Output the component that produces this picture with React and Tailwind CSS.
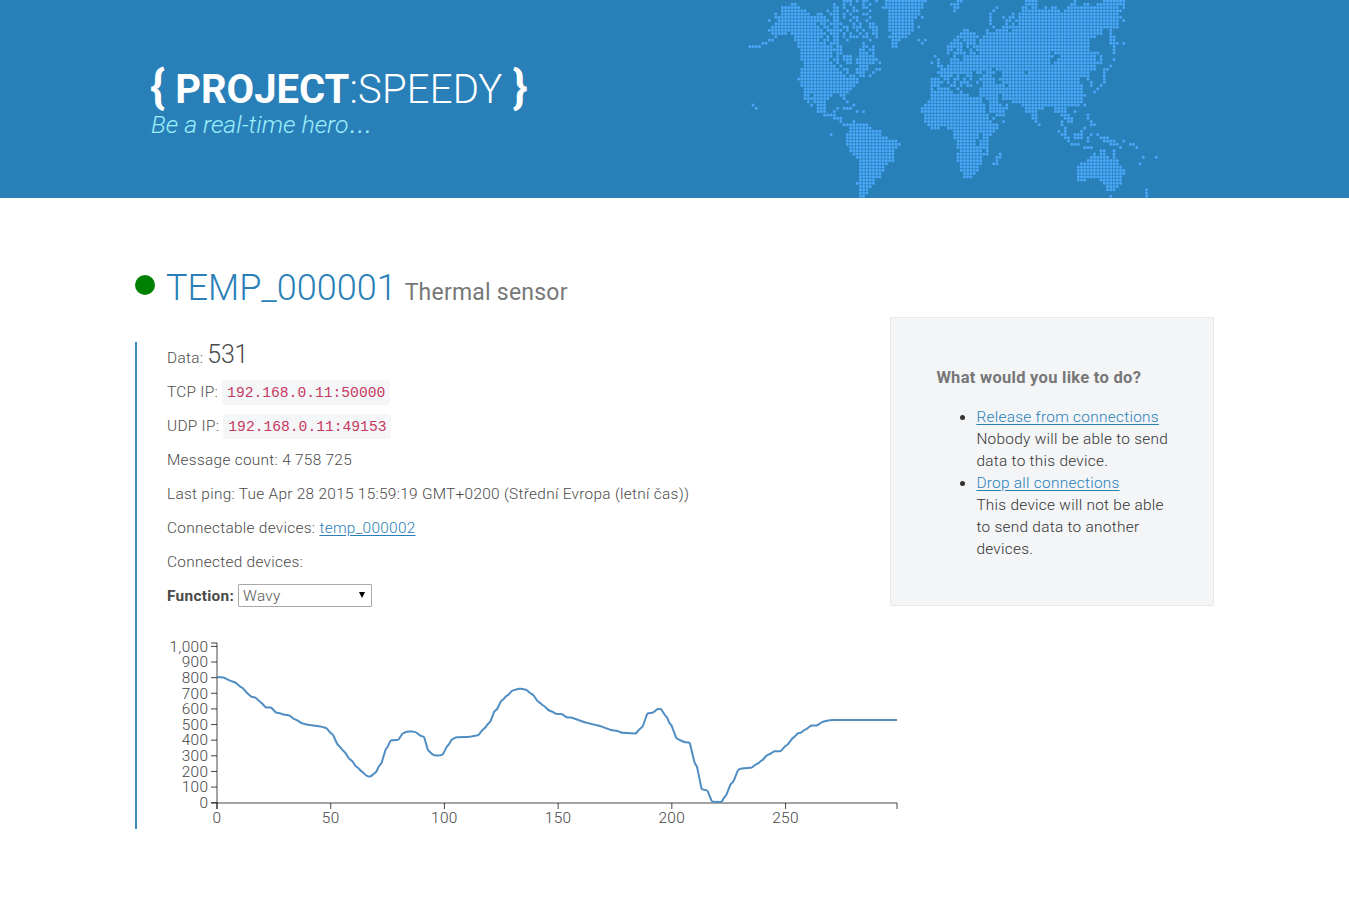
import React from "react";

// World map dots: one string per row, each holding runs of column numbers.
const MAP_ROWS = [
  "29-31 33 35-36 39 42-54 64-65 85-88 100 109-115",
  "13-14 26 29 31 35 37 42-53 62-64 85-88 99-100 103-104 107-115",
  "10-15 26-27 29 32 35-36 41-53 63-64 76 84-85 87-88 91 93-94 98-113 115",
  "10-16 17 24 26-27 30 32 33 37 43-52 63 75 84-88 89-95 97-113 114",
  "8 10-18 21-22 25-27 29 31 35-36 43-52 74 81 83-113",
  "8-20 21-23 26-27 29 32-33 37 43-50 51 53 74 78 80-81 83-113 114",
  "6 9-24 26-27 31 33 36 43-50 74 79-80 82-113 115",
  "8-20 22-23 25-28 32 34 37-38 43-50 74 79 81 83-113",
  "7-21 23-24 26-27 29-30 32-34 37-39 43-50 52 75 78-113",
  "6-22 24-28 30 33 35 38-39 43-50 66-67 73 76-79 81-108 111",
  "7-11 13-23 25-27 29 31 34 36 38-39 44-49 65-69 73-108 111",
  "8 14-22 24 26-27 29 31-33 35-36 39 43 44-48 64-70 72-106 111-112",
  "6-7 14-21 23-24 26-27 30 37 44-46 52 54 63-64 66-69 71-104 111-112",
  "4-5 15-23 25-27 35 44-45 53 62-65 67-69 71-104 111-113 115",
  "0-3 15-25 27-28 35-36 38 44-45 61-65 67 69-104 112",
  "16-28 34-35 37-38 61-62 64-65 68 70-104 112",
  "16-25 27-28 34-36 38 61 63-66 68-69 71-92 94-107 112",
  "16-25 27 29-31 34-38 57 63 66-93 96-106 108",
  "16-24 26-27 29-31 33-39 58 62-64 66-92 95-106 108 112",
  "17-25 27 30-31 33-38 40 56 58 62-92 94-107 108",
  "17-26 28 34-36 58-59 61-106 111",
  "16-27 29-30 33-36 39-40 59-74 76-106 109-110",
  "16-28 30 33-35 38 58-68 70-71 73-75 78-84 86-104 109",
  "16-29 31-32 34-35 37 59-62 64 67-68 72-74 78-104 109",
  "15-33 56-58 60-61 63-64 66 68 71-75 77-101 104 109",
  "16-33 56-59 61 63 65-67 70 72-75 78-101 105 109",
  "16-32 56-58 62-63 65 67-68 72-78 80-102 105 108",
  "17-31 56 58-61 64 71-102 107",
  "17-30 56-62 65 71-102 106",
  "17-18 20-25 28-29 56-66 67 71-76 78-103",
  "17-24 29 56-71 73-76 78-102",
  "18 20-23 30 55-71 74-76 81-102",
  "1 19 21-23 32 54-72 74-77 79 84-101 103",
  "2 21-23 27 29-31 53-72 74-79 85-90 94-97",
  "21-23 26 33 35 53-72 74-78 85-88 94-97 100",
  "23-26 54-73 76-78 87-88 96-98 104",
  "26-28 54-73 75 87-88 97-99 104",
  "28 32 54-74 78 88 96 98-99 105",
  "29-36 55-76 89 96 105-106",
  "31-37 56-58 61-76 97 103",
  "31-40 63-75 95 97 102",
  "25 30-40 63-70 72-74 96-97 100-102 105 107",
  "30-42 63-70 72-73 97-98 100-102 104 108-110",
  "30-45 64-69 71-73 98 104 109-112 115",
  "30-46 64-69 71-73 99-101 111-113 117-118",
  "31-45 64-73 103-105 114 119",
  "31-44 65-71 73 108-109 112",
  "32-44 64-73 77 106 108-109 112",
  "33-44 64-71 76-77 105-110 112 121 125",
  "34-44 64-71 76 104-113",
  "34-42 65-71 75-76 102-113 120",
  "34-41 65-70 101-114",
  "34-41 65-70 101-115",
  "34-40 66-69 101-115",
  "34-40 66-68 101-114",
  "34-38 101-103 108-114",
  "33-38 109-114",
  "34-37 110-113",
  "34-36 110-112 122",
  "34-36 122",
  "34-35 111 122",
];

function WorldMap() {
  const dots = [];
  MAP_ROWS.forEach((row, r) =>
    row.split(" ").forEach((run) => {
      const [a, b = a] = run.split("-").map(Number);
      for (let c = a; c <= b; c++) {
        const x = 1.8 + c * 3.252;
        const y = 0.95 + r * 3.255;
        dots.push(`M${(x - 1.5).toFixed(2)} ${y.toFixed(2)}a1.5 1.5 0 1 0 3 0a1.5 1.5 0 1 0 -3 0`);
      }
    })
  );
  return (
    <svg className="absolute left-[748px] top-0" width="420" height="198" aria-hidden="true">
      <path d={dots.join("")} fill="#4ba7f7" />
    </svg>
  );
}

// Curve vertices, in thirds of a pixel.
const CURVE =
  "171,141 193,143 205,150 227,158 240,170 248,174 262,190 275,201 286,202 297,213 304,218 317,232 334,233 348,248 362,250 370,254 388,256 402,267 410,270 424,279 440,284 480,289 499,294 512,309 519,314 532,343 540,350 547,360 555,367 568,387 576,392 587,409 594,413 602,422 608,426 620,438 628,440 636,437 641,431 648,427 657,408 664,401 677,358 683,350 692,331 715,330 727,311 738,306 753,304 769,307 780,317 792,320 804,361 811,367 820,375 835,377 848,374 861,349 866,344 875,329 888,322 920,321 932,320 945,317 955,316 968,299 976,293 984,281 991,275 1003,244 1011,238 1023,213 1031,207 1038,199 1046,194 1056,182 1078,176 1099,179 1110,189 1120,195 1132,213 1140,218 1147,225 1154,229 1166,241 1175,244 1188,252 1206,252 1220,262 1235,263 1275,277 1320,288 1353,300 1372,303 1385,308 1427,311 1440,296 1448,290 1462,250 1480,248 1492,237 1503,237 1515,256 1521,262 1528,279 1535,287 1549,325 1572,336 1589,338 1604,399 1611,410 1625,478 1642,481 1656,515 1685,516 1692,503 1699,495 1712,462 1720,455 1734,420 1742,416 1775,413 1788,403 1795,400 1802,393 1809,389 1820,376 1830,372 1842,364 1862,364 1876,348 1883,344 1897,325 1903,321 1913,310 1923,308 1933,300 1939,298 1952,287 1972,286 1986,276 1995,274 2005,271 2025,270 2211,270";

const Y_TICKS = ["0", "100", "200", "300", "400", "500", "600", "700", "800", "900", "1,000"];
const X_TICKS = [0, 50, 100, 150, 200, 250];

// Quadratic segments around each vertex keep the curve soft.
function smoothPath(pts) {
  const f = (v) => v.toFixed(2);
  let d = `M${f(pts[0][0])} ${f(pts[0][1])}`;
  for (let i = 1; i < pts.length - 1; i++) {
    const [x, y] = pts[i];
    const [nx, ny] = pts[i + 1];
    const [px, py] = pts[i - 1];
    const a = Math.min(0.5, 1.2 / Math.hypot(x - px, y - py));
    const b = Math.min(0.5, 1.2 / Math.hypot(nx - x, ny - y));
    d += `L${f(x - (x - px) * a)} ${f(y - (y - py) * a)}Q${f(x)} ${f(y)} ${f(x + (nx - x) * b)} ${f(y + (ny - y) * b)}`;
  }
  const last = pts[pts.length - 1];
  return `${d}L${f(last[0])} ${f(last[1])}`;
}

function Chart() {
  const pts = CURVE.split(" ").map((p) => p.split(",").map((v) => Number(v) / 3));
  return (
    <svg className="-ml-[7px] block overflow-visible" width="750" height="200" viewBox="0 0 750 200">
      <g fill="none" stroke="#000" strokeOpacity="0.72" strokeWidth="1">
        <path d="M51 13H57V173H51" />
        <path d="M57 179V173H737V179" />
        {Y_TICKS.map((t, i) => (
          <path key={t} d={`M51 ${(172.7 - i * 15.63).toFixed(2)}h6`} />
        ))}
        {X_TICKS.map((t) => (
          <path key={t} d={`M${(57 + t * 2.2742).toFixed(2)} 173v6`} />
        ))}
      </g>
      <g className="fill-[#444] text-[15.4px] font-light tracking-[0.4px]">
        {Y_TICKS.map((t, i) => (
          <text key={t} x="48.5" y={(178 - i * 15.63).toFixed(2)} textAnchor="end">
            {t}
          </text>
        ))}
        {X_TICKS.map((t) => (
          <text key={t} x={(57 + t * 2.2742).toFixed(2)} y="193" textAnchor="middle">
            {t}
          </text>
        ))}
      </g>
      <path d={smoothPath(pts)} fill="none" stroke="#4f8dc3" strokeWidth="2" />
    </svg>
  );
}

const code = "rounded-[4px] bg-[#f4f6f8] px-[5px] pb-[4px] pt-[5px] font-['Liberation_Mono',monospace] text-[14.65px] font-normal tracking-normal text-[#c7395f]";
const link = "text-[#2980b9] underline underline-offset-[1.5px]";

export default function App() {
  return (
    <div className="h-[904px] overflow-hidden bg-white font-['Roboto',sans-serif] text-[15.4px] font-light text-[#333]">
      <header className="relative h-[198px] overflow-hidden bg-[#2980b9]">
        <WorldMap />
        <div className="relative ml-[151px] pt-[63px]">
          <h1 className="-ml-px flex h-[47px] items-baseline text-[40px] leading-[48px] text-white">
            <span className="mr-[10px] text-[46px] font-bold">{"{"}</span>
            <span className="font-bold">PROJECT</span>
            <span className="tracking-[0.2px]">:SPEEDY</span>
            <span className="ml-[10px] text-[46px] font-bold">{"}"}</span>
          </h1>
          <p className="text-[24.8px] italic leading-[30px] text-[#9beefa]">
            Be a real-time hero<span className="font-['Liberation_Sans',sans-serif] text-[24px]">…</span>
          </p>
        </div>
      </header>

      <main className="ml-[135px] flex w-[1079px] justify-between">
        <section className="w-[740px]">
          <h2 className="mt-[67px] flex h-[46px] items-baseline leading-[46px]">
            <span className="size-5 shrink-0 -translate-y-[5px] rounded-full bg-[#008000]" />
            <span className="ml-[11px] text-[36px] text-[#2980b9]">TEMP_000001</span>
            <span className="ml-[8px] text-[23px] font-normal tracking-[0.22px] text-[#777]">Thermal sensor</span>
          </h2>
          <div className="mt-[31px] h-[487px] border-l-2 border-[#3a8bc0] pl-[30px] leading-[34px] tracking-[0.29px] text-[#4a4a4a]">
            <div className="h-[33px] leading-[26px]">
              Data: <span className="text-[25px] tracking-[-0.2px]">531</span>
            </div>
            <div className="h-[34px] leading-[35px]">
              TCP IP: <code className={code}>192.168.0.11:50000</code>
            </div>
            <div className="h-[34px] leading-[35px]">
              UDP IP: <code className={code}>192.168.0.11:49153</code>
            </div>
            <div className="h-[34px]">Message count: 4 758 725</div>
            <div className="h-[34px]">Last ping: Tue Apr 28 2015 15:59:19 GMT+0200 (Střední Evropa (letní čas))</div>
            <div className="h-[34px]">
              Connectable devices: <a className={link}>temp_000002</a>
            </div>
            <div className="h-[34px]">Connected devices:</div>
            <div className="flex h-[34px] items-center">
              <span className="font-bold">Function:</span>
              <span className="-mt-0.5 ml-1 flex h-[23px] w-[134px] items-center justify-between rounded-[1px] border border-[#a9a9a9] pl-1 pr-[5px] text-[#555]">
                <span className="pt-px leading-[22px]">Wavy</span>
                <svg width="8" height="7" viewBox="0 0 8 7">
                  <path d="M1 0H7L4 6Z" fill="#000" />
                </svg>
              </span>
            </div>
            <div className="mt-[17px]">
              <Chart />
            </div>
          </div>
        </section>

        <aside className="mt-[119px] h-[289px] w-[324px] border border-[#e7e9ea] bg-[#f3f5f7] pl-[45.4px] pt-[49px] leading-[22px] tracking-[0.28px]">
          <h3 className="text-[16.5px] font-bold text-[#777]">What would you like to do?</h3>
          <ul className="mt-[17px] list-disc pl-[40px]">
            <li>
              <a className={link}>Release from connections</a>
              <br />
              Nobody will be able to send
              <br />
              data to this device.
            </li>
            <li>
              <a className={link}>Drop all connections</a>
              <br />
              This device will not be able
              <br />
              to send data to another
              <br />
              devices.
            </li>
          </ul>
        </aside>
      </main>
    </div>
  );
}
